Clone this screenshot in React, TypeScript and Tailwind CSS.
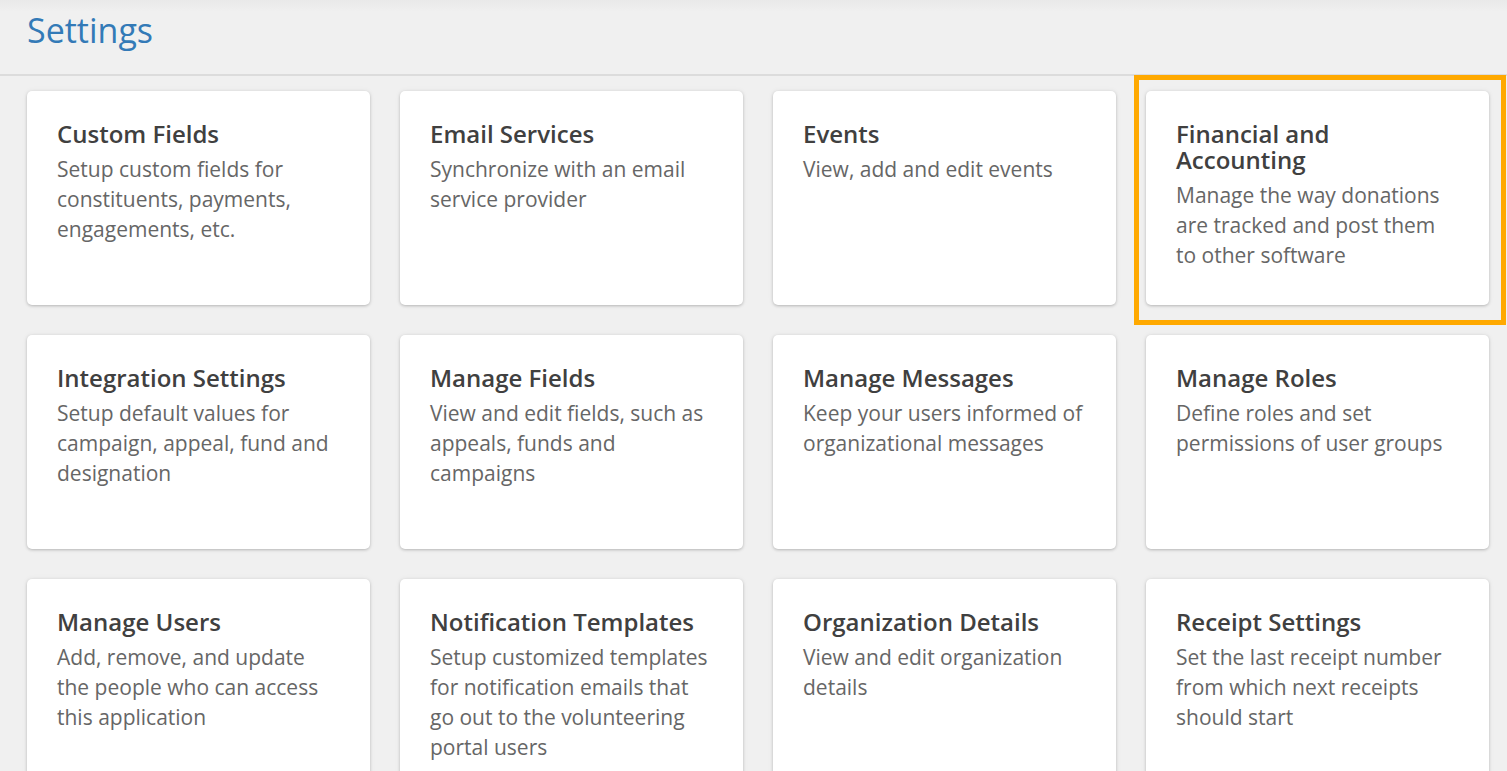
import React from "react";

type SettingItem = {
  title: string;
  description: string;
};

const ITEMS: SettingItem[] = [
  { title: "Custom Fields", description: "Setup custom fields for constituents, payments, engagements, etc." },
  { title: "Email Services", description: "Synchronize with an email service provider" },
  { title: "Events", description: "View, add and edit events" },
  { title: "Financial and Accounting", description: "Manage the way donations are tracked and post them to other software" },
  { title: "Integration Settings", description: "Setup default values for campaign, appeal, fund and designation" },
  { title: "Manage Fields", description: "View and edit fields, such as appeals, funds and campaigns" },
  { title: "Manage Messages", description: "Keep your users informed of organizational messages" },
  { title: "Manage Roles", description: "Define roles and set permissions of user groups" },
  { title: "Manage Users", description: "Add, remove, and update the people who can access this application" },
  { title: "Notification Templates", description: "Setup customized templates for notification emails that go out to the volunteering portal users" },
  { title: "Organization Details", description: "View and edit organization details" },
  { title: "Receipt Settings", description: "Set the last receipt number from which next receipts should start" },
];

function SettingCard({ item }: { item: SettingItem }) {
  return (
    <a
      href="#"
      className="block h-[214px] rounded-[5px] bg-white pl-[30px] pr-[32px] pt-[30px] shadow-[0_1px_3px_rgba(0,0,0,0.22),0_0_6px_rgba(0,0,0,0.05)]"
    >
      <h3 className="text-[24px] font-semibold leading-[26px] text-[#404040]">{item.title}</h3>
      <p className="mt-[7px] text-[21px] leading-[30px] text-[#666]">{item.description}</p>
    </a>
  );
}

export default function App() {
  return (
    <div className="relative h-[771px] overflow-hidden bg-[#f0f0f0] font-['Open_Sans',sans-serif]">
      <header className="h-[76px] border-b-2 border-[#dcdcdc] bg-gradient-to-b from-[#e9e9e9] to-[#f0f0f0] to-[12px] pl-[27px] pt-[10px]">
        <h1 className="text-[34px] leading-[40px] text-[#337ab7]">Settings</h1>
      </header>

      <div className="grid grid-cols-[repeat(4,343px)] gap-[30px] pl-[27px] pt-[15px]">
        {ITEMS.map((item) => (
          <SettingCard key={item.title} item={item} />
        ))}
      </div>

      {/* highlight around the selected tile */}
      <div className="pointer-events-none absolute left-[1134px] top-[75px] h-[250px] w-[372px] border-[5px] border-[#ffa900]" />
    </div>
  );
}
